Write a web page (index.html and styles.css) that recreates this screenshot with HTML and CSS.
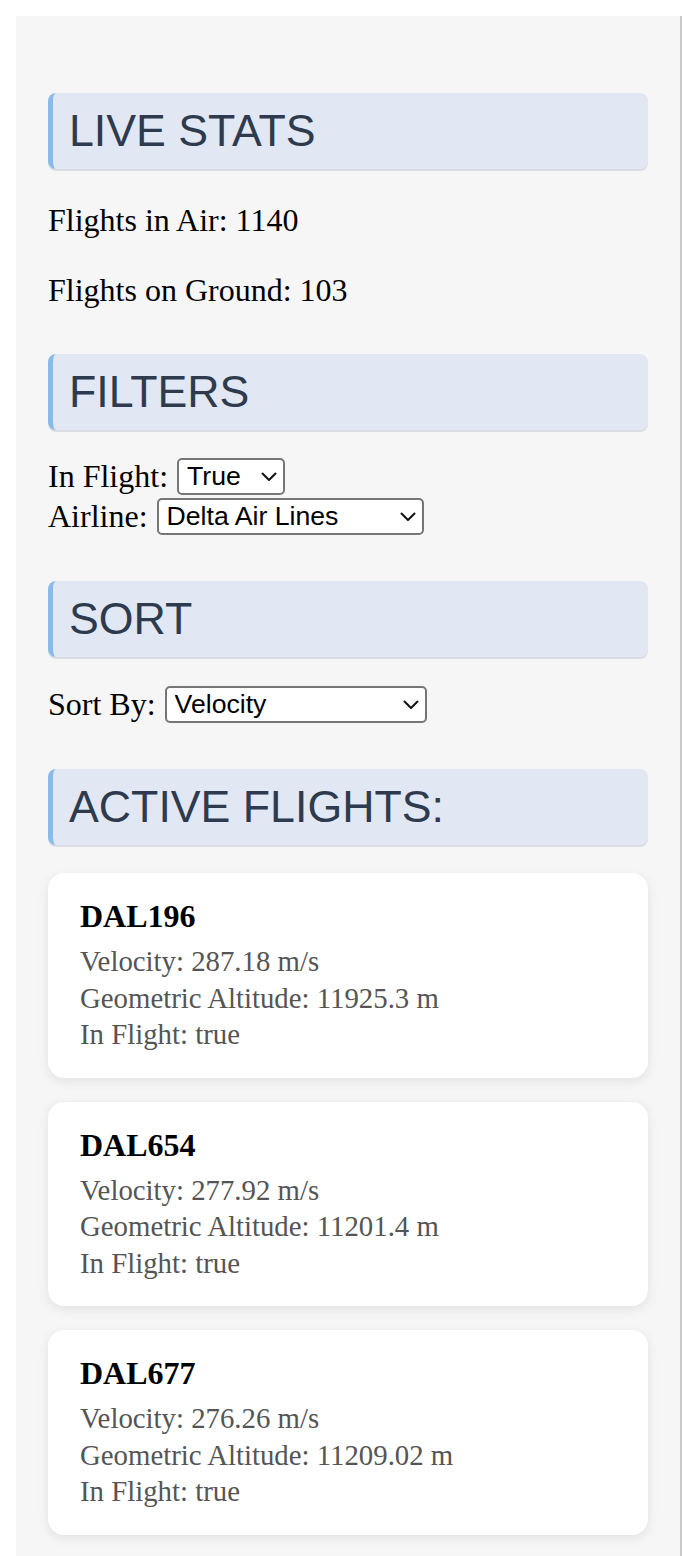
FILE: index.html
```html
<!DOCTYPE html>
<html lang="en">
<head>
<meta charset="utf-8">
<title>Flight Tracker</title>
<link rel="stylesheet" href="styles.css">
</head>
<body>
<aside class="panel">
  <h2 class="title">LIVE STATS</h2>
  <p class="stat">Flights in Air: 1140</p>
  <p class="stat">Flights on Ground: 103</p>

  <h2 class="title">FILTERS</h2>
  <div class="controls">
    <div class="row">
      <label for="f-flight">In Flight:</label>
      <span class="select-wrap">
        <select id="f-flight" class="select w-flight"><option>True</option><option>False</option></select>
        <svg class="chev" width="16" height="10" viewBox="0 0 16 10"><path d="M1.5 1.5 L8 8 L14.5 1.5" fill="none" stroke="#111" stroke-width="2" stroke-linecap="round" stroke-linejoin="round"/></svg>
      </span>
    </div>
    <div class="row">
      <label for="f-airline">Airline:</label>
      <span class="select-wrap">
        <select id="f-airline" class="select w-airline"><option>Delta Air Lines</option></select>
        <svg class="chev" width="16" height="10" viewBox="0 0 16 10"><path d="M1.5 1.5 L8 8 L14.5 1.5" fill="none" stroke="#111" stroke-width="2" stroke-linecap="round" stroke-linejoin="round"/></svg>
      </span>
    </div>
  </div>

  <h2 class="title">SORT</h2>
  <div class="controls sort">
    <div class="row">
      <label for="f-sort">Sort By:</label>
      <span class="select-wrap">
        <select id="f-sort" class="select w-sort"><option>Velocity</option></select>
        <svg class="chev" width="16" height="10" viewBox="0 0 16 10"><path d="M1.5 1.5 L8 8 L14.5 1.5" fill="none" stroke="#111" stroke-width="2" stroke-linecap="round" stroke-linejoin="round"/></svg>
      </span>
    </div>
  </div>

  <h2 class="title">ACTIVE FLIGHTS:</h2>
  <div class="cards">
    <div class="card">
      <h3 class="callsign">DAL196</h3>
      <p class="detail">Velocity: 287.18 m/s</p>
      <p class="detail">Geometric Altitude: 11925.3 m</p>
      <p class="detail">In Flight: true</p>
    </div>
    <div class="card">
      <h3 class="callsign">DAL654</h3>
      <p class="detail">Velocity: 277.92 m/s</p>
      <p class="detail">Geometric Altitude: 11201.4 m</p>
      <p class="detail">In Flight: true</p>
    </div>
    <div class="card">
      <h3 class="callsign">DAL677</h3>
      <p class="detail">Velocity: 276.26 m/s</p>
      <p class="detail">Geometric Altitude: 11209.02 m</p>
      <p class="detail">In Flight: true</p>
    </div>
  </div>
</aside>
</body>
</html>
```
FILE: styles.css
```css
html, body {
  background: #ffffff;
}
body {
  margin: 16px 0 0 16px;
  font-family: "Liberation Serif", "Times New Roman", serif;
  font-size: 32px;
  color: #000;
  overflow: hidden;
}
.panel {
  width: 600px;
  min-height: 1540px;
  padding: 32px 32px 32px 32px;
  background: #f6f6f6;
  border-right: 2px solid #c9c9c9;
  box-sizing: content-box;
}
.title {
  margin: 45px 0 0 0;
  height: 76px;
  box-sizing: border-box;
  padding: 0 16px;
  display: flex;
  align-items: center;
  background: #e2e8f3;
  border-left: 5px solid #86bbea;
  border-radius: 8px;
  box-shadow: 0 2px 0 #d9dde3;
  font-family: "Liberation Sans", Arial, sans-serif;
  font-weight: normal;
  font-size: 44.7px;
  line-height: 50px;
  color: #2e3b4e;
}
.stat {
  margin: 33px 0 0 0;
  line-height: 37px;
}
.controls {
  margin-top: 26px;
}
.controls.sort {
  margin-top: 27px;
}
.row {
  height: 40px;
  display: flex;
  align-items: center;
  gap: 9px;
}
.row label {
  line-height: 37px;
}
.select-wrap {
  position: relative;
  display: inline-flex;
}
.select {
  appearance: none;
  -webkit-appearance: none;
  height: 37px;
  box-sizing: border-box;
  margin: 0;
  padding: 0 30px 0 8px;
  border: 2px solid #767676;
  border-radius: 5px;
  background: #ffffff;
  color: #000;
  font-family: "Liberation Sans", Arial, sans-serif;
  font-size: 26.67px;
  line-height: 33px;
}
.w-flight { width: 108px; }
.w-airline { width: 267px; }
.w-sort { width: 262px; }
.chev {
  position: absolute;
  right: 8px;
  top: 14px;
  pointer-events: none;
}
.cards {
  margin-top: 28px;
  display: flex;
  flex-direction: column;
  gap: 24px;
}
.card {
  background: #ffffff;
  border-radius: 16px;
  padding: 25px 32px;
  box-shadow: 0 3px 12px rgba(0, 0, 0, 0.09);
}
.callsign {
  margin: 0 0 8px 0;
  font-size: 32px;
  line-height: 37px;
  font-weight: bold;
}
.detail {
  margin: 0;
  font-size: 28.8px;
  line-height: 36.5px;
  color: #555555;
}
```
